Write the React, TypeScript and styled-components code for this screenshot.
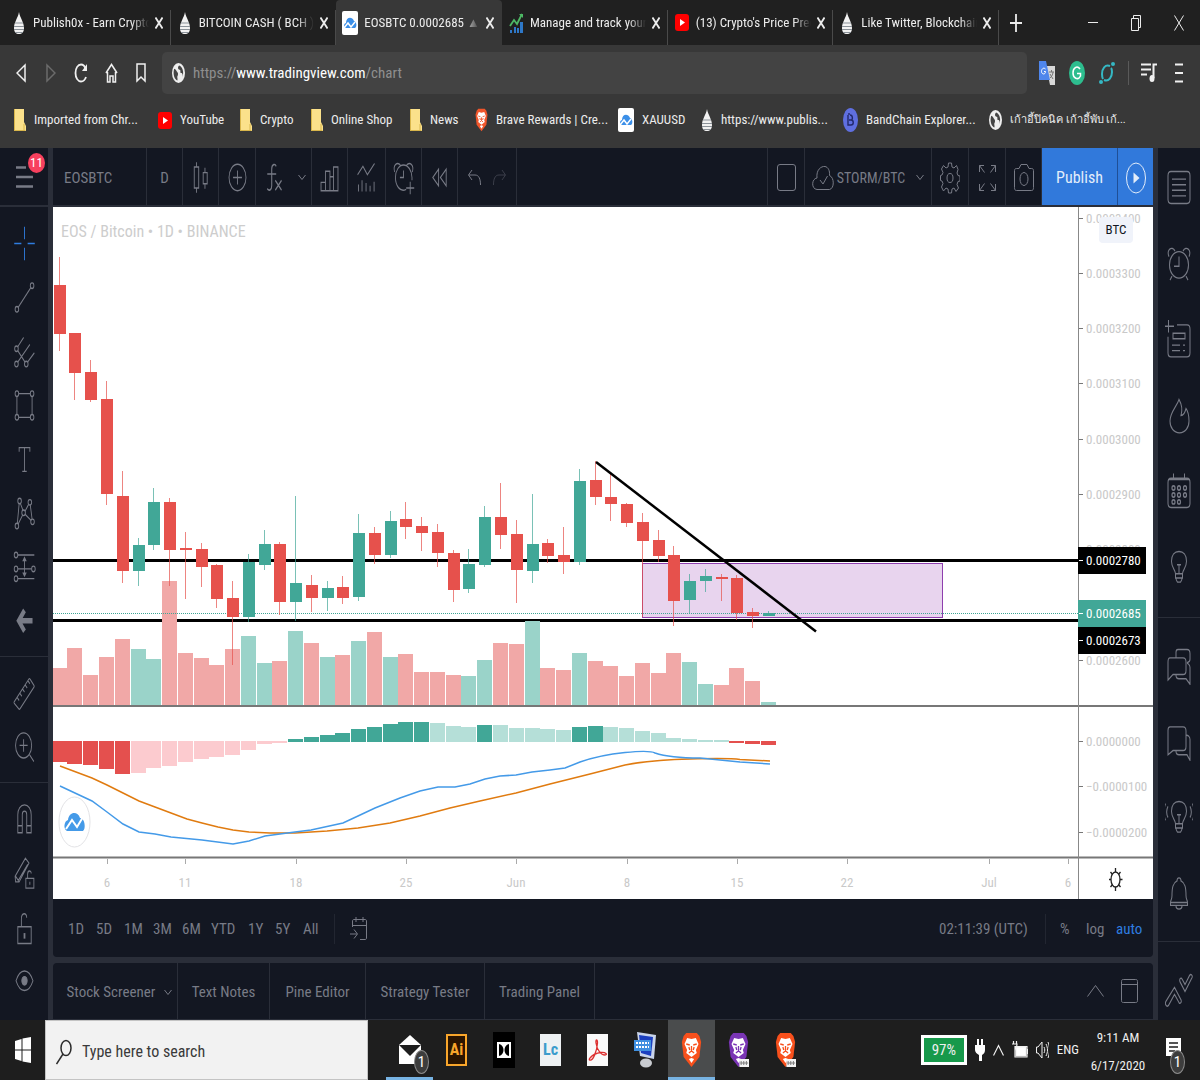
import React, { useState } from 'react';
import styled, { createGlobalStyle, css } from 'styled-components';

const GlobalStyle = createGlobalStyle`
  * {
    box-sizing: border-box;
  }
  body {
    margin: 0;
    background: #131722;
    font-family: 'Roboto Condensed', 'Noto Sans', 'Liberation Sans', sans-serif;
    font-size: 15px;
    line-height: 20px;
  }
  button, input {
    font: inherit;
    color: inherit;
    background: none;
    border: 0;
    padding: 0;
    margin: 0;
  }
  button {
    cursor: pointer;
  }
  svg {
    display: block;
    flex: none;
  }
`

const Page = styled.div`
  display: flex;
  flex-direction: column;
  min-height: 100vh;
`

/* ---------- icons ---------- */

interface IconProps {
  w?: number
  h?: number
  box?: string
  children: React.ReactNode
}

const Icon: React.FC<IconProps> = ({ w = 25, h = 39, box = '0 0 28 28', children }) => (
  <svg width={w} height={h} viewBox={box} preserveAspectRatio="none" fill="none" stroke="currentColor" strokeWidth={1} aria-hidden="true">
    {children}
  </svg>
)

const Drop = () => (
  <Icon w={12} h={24} box="0 0 12 24">
    <path d="M6 1C7 7 11 11 11 17c0 4-2 6-5 6s-5-2-5-6C1 11 5 7 6 1z" fill="#f2f2f2" stroke="none" />
    <path d="M2 12h8M1 15.500h10M1 18.500h10M2 21.500h8" stroke="#8b9299" />
  </Icon>
)

const TradingCloud = () => (
  <Icon w={16} h={24} box="0 0 16 24">
    <rect width="16" height="24" rx="2" fill="#fff" stroke="none" />
    <path d="M4 17c-3-1-2-5 0-5 0-6 6-7 8-2 3 1 3 6 1 7z" fill="#3b8fe8" stroke="none" />
    <path d="M2 17l4-5 3 4 4-5" stroke="#fff" strokeWidth="1.500" />
  </Icon>
)

const ChartLogo = () => (
  <Icon w={14} h={20} box="0 0 14 20">
    <path d="M1 17v3h2v-3zM5 14v6h2v-6zM8 15v5h2v-5zM11 9v11h3V9z" fill="#2e78c8" stroke="none" />
    <path d="M1 13l4-6 3 4 5-10" stroke="#4db864" strokeWidth="1.800" />
    <path d="M10 1h4v4z" fill="#4db864" stroke="none" />
  </Icon>
)

const Tube = () => (
  <Icon w={14} h={17} box="0 0 14 17">
    <rect width="14" height="17" rx="3" fill="#f00" stroke="none" />
    <path d="M5 5l5 3.500-5 3.500z" fill="#fff" stroke="none" />
  </Icon>
)

const Folder = () => (
  <Icon w={12} h={22} box="0 0 12 22">
    <path d="M0 0h10v13l2 4v5H0z" fill="#fbe18b" stroke="none" />
    <path d="M.5 21.500h11M.5 0v22M10 15v6" stroke="#d9b64b" />
  </Icon>
)

const Globe = () => (
  <Icon w={13} h={20} box="0 0 24 24">
    <circle cx="12" cy="12" r="12" fill="#eee" stroke="none" />
    <path d="M4 7c3 0 4 3 6 4s1 4 0 5 1 3 0 5C5 20 1 14 4 7zM13 3c-3 2-2 5 1 5s0 4 3 4 3 3 2 5c4-6 0-13-6-14z" fill="#444" stroke="none" />
  </Icon>
)

const Lion: React.FC<{ fill: string; w?: number; h?: number; tag?: boolean }> = ({ fill, w = 13, h = 24, tag }) => (
  <Icon w={w} h={h} box="0 0 24 36">
    <path d="M6 1h12l3 3 2 6-2 15-9 10-9-10L1 10l2-6z" fill={fill} stroke="none" />
    <path d="M7 6l5 1 5-1 3 6-3 6 1 3-6 4-6-4 1-3-3-6zM12 26l3 1-3 4-3-4z" fill="#fff" stroke="none" />
    <path d="M6 12l4 1M18 12l-4 1M12 14v5M9 21l3-2 3 2M9 15l1 3M15 15l-1 3" stroke={fill} strokeWidth="1.500" />
    {tag && <path d="M13 27h11v8H13z" fill="#f4f4f4" stroke="none" />}
    {tag && <path d="M14 31h9M15 29v4M18 29v4M21 29v4" stroke="#777" />}
  </Icon>
)

const BandLogo = () => (
  <Icon w={15} h={24} box="0 0 15 24">
    <ellipse cx="7.500" cy="12" rx="7.500" ry="12" fill="#5f6fe0" stroke="none" />
    <path d="M5 7v10h3c3 0 3-5 0-5H6M6 12h2c2 0 2-5-1-5M6 5v2" stroke="#22296b" strokeWidth="1.400" />
  </Icon>
)

const Chevron = () => (
  <Icon w={8} h={7} box="0 0 8 7"><path d="M.5 1l3.500 4.500L7.500 1" /></Icon>
)

const Badge = styled.span<{ $tone?: 'pink' }>`
  position: absolute;
  display: grid;
  place-items: center;
  border-radius: 50%;
  color: #fff;
  ${p => p.$tone === 'pink' ? css`
    top: 5px;
    right: 3px;
    width: 17px;
    height: 20px;
    background: #f7405e;
    font-size: 13px;
  ` : css`
    right: 4px;
    bottom: 6px;
    width: 15px;
    height: 24px;
    background: #3d3d3d;
    border: 1px solid #8a8a8a;
    font-size: 15px;
  `}
`

/* ---------- browser ---------- */

const TabBar = styled.header`
  display: flex;
  height: 45px;
  padding-left: 5px;
  background: #202020;
  color: #ececec;
`

const Tabs = styled.div`
  display: flex;
  flex: 0 1 994px;
  min-width: 0;
`

const Tab = styled.div<{ $active?: boolean }>`
  flex: 1 1 0;
  min-width: 0;
  display: flex;
  align-items: center;
  gap: 6px;
  padding: 0 8px 0 6px;
  font-size: 13px;
  background: ${p => p.$active ? '#383838' : 'transparent'};
  border-radius: 4px 4px 0 0;
  position: relative;
  &::after {
    content: '';
    position: absolute;
    right: 0;
    top: 10px;
    bottom: 0;
    width: 1px;
    background: ${p => p.$active ? 'transparent' : '#4a4a4a'};
  }
`

const Favicon = styled.span`
  flex: 0 0 16px;
  display: grid;
  place-items: center;
`

const TabTitle = styled.button`
  flex: 1;
  min-width: 0;
  overflow: hidden;
  white-space: nowrap;
  text-align: left;
  mask-image: linear-gradient(90deg, #000 85%, transparent);
`

const PlainButton = styled.button`
  flex: none;
  display: grid;
  place-items: center;
`

const NewTab = styled(PlainButton)`
  width: 33px;
`

const WindowButtons = styled.div`
  display: flex;
  margin-left: auto;
  button {
    width: 43px;
  }
`

const NavBar = styled.nav`
  display: flex;
  align-items: center;
  height: 55px;
  padding: 0 6px;
  background: #383838;
  color: #f0f0f0;
`

const NavButton = styled(PlainButton)<{ $dim?: boolean }>`
  width: 30px;
  height: 40px;
  color: ${p => p.$dim ? '#6b6b6b' : 'inherit'};
`

const UrlBar = styled.label`
  flex: 1;
  display: flex;
  align-items: center;
  height: 42px;
  margin: 0 5px 0 6px;
  padding-left: 10px;
  border-radius: 5px;
  background: #434343;
  color: #8f8f8f;
  font-size: 15px;
  svg {
    margin-right: 8px;
  }
  input {
    field-sizing: content;
    color: #fff;
    outline: 0;
  }
`

const Bookmarks = styled.nav`
  display: flex;
  align-items: center;
  height: 48px;
  padding: 0 14px 8px;
  background: #383838;
  color: #ececec;
  font-size: 13px;
`

const Bookmark = styled.a<{ $w: number; $small?: boolean }>`
  flex: 0 1 ${p => p.$w}px;
  display: flex;
  align-items: center;
  gap: 8px;
  font-size: ${p => p.$small ? 11 : 13}px;
  color: inherit;
  text-decoration: none;
  white-space: nowrap;
`

const tabs = [
  { title: 'Publish0x - Earn Crypto', icon: <Drop /> },
  { title: 'BITCOIN CASH ( BCH ) ', icon: <Drop /> },
  { title: 'EOSBTC 0.0002685 ▲ +', icon: <TradingCloud /> },
  { title: 'Manage and track your', icon: <ChartLogo /> },
  { title: "(13) Crypto's Price Predi", icon: <Tube /> },
  { title: 'Like Twitter, Blockchain', icon: <Drop /> },
]

const bookmarks = [
  { title: 'Imported from Chr...', icon: <Folder />, w: 144 },
  { title: 'YouTube', icon: <Tube />, w: 82 },
  { title: 'Crypto', icon: <Folder />, w: 71 },
  { title: 'Online Shop', icon: <Folder />, w: 99 },
  { title: 'News', icon: <Folder />, w: 65 },
  { title: 'Brave Rewards | Cre...', icon: <Lion fill="#f1562b" />, w: 143 },
  { title: 'XAUUSD', icon: <TradingCloud />, w: 83 },
  { title: 'https://www.publis...', icon: <Drop />, w: 142 },
  { title: 'BandChain Explorer...', icon: <BandLogo />, w: 146 },
  { title: 'เก้าอี้ปิคนิค เก้าอี้พับ เก้...', icon: <Globe />, w: 150, small: true },
]

const CloseIcon = () => (
  <Icon w={8} h={12} box="0 0 8 12"><path d="M.5 .5l7 11M7.500 .5l-7 11" strokeWidth="1.800" /></Icon>
)

const Browser: React.FC = () => {
  const [url, setUrl] = useState<string>('www.tradingview.com')
  return (
    <>
      <TabBar>
        <Tabs>
          {tabs.map((tab, i) => (
            <Tab key={tab.title} $active={i === 2}>
              <Favicon>{tab.icon}</Favicon>
              <TabTitle>{tab.title}</TabTitle>
              <PlainButton aria-label="Close tab"><CloseIcon /></PlainButton>
            </Tab>
          ))}
        </Tabs>
        <NewTab aria-label="New tab">
          <Icon w={12} h={18} box="0 0 12 18"><path d="M6 0v18M0 9h12" strokeWidth="1.800" /></Icon>
        </NewTab>
        <WindowButtons>
          <PlainButton aria-label="Minimize"><Icon w={10} h={16} box="0 0 10 16"><path d="M0 7.500h10" /></Icon></PlainButton>
          <PlainButton aria-label="Restore"><Icon w={10} h={16} box="0 0 10 16"><path d="M.5 3.500h7v12h-7zM2.500 3V.500h7v12H8" /></Icon></PlainButton>
          <PlainButton aria-label="Close"><Icon w={10} h={16} box="0 0 10 16"><path d="M.5 .5l9 15M9.500 .5l-9 15" /></Icon></PlainButton>
        </WindowButtons>
      </TabBar>
      <NavBar>
        <NavButton aria-label="Back"><Icon w={10} h={20} box="0 0 10 20"><path d="M9 2v16L1 10z" strokeWidth="1.500" /></Icon></NavButton>
        <NavButton aria-label="Forward" $dim><Icon w={10} h={20} box="0 0 10 20"><path d="M1 2v16l8-8z" strokeWidth="1.500" /></Icon></NavButton>
        <NavButton aria-label="Reload">
          <Icon w={14} h={20} box="0 0 14 20">
            <path d="M12 14c-1 3-3 4.500-5 4.500C4 18.500 1.500 15 1.500 10S4 1.500 7 1.500c2 0 3.500 1 4.500 4" strokeWidth="1.800" />
            <path d="M13 1v7H8z" fill="currentColor" stroke="none" />
          </Icon>
        </NavButton>
        <NavButton aria-label="Home">
          <Icon w={13} h={20} box="0 0 13 20"><path d="M1 10l5.500-8.500L12 10M2.500 9v10H5v-6h3v6h2.500V9" strokeWidth="1.500" /></Icon>
        </NavButton>
        <NavButton aria-label="Bookmark this page">
          <Icon w={10} h={20} box="0 0 10 20"><path d="M1 1h8v17l-4-4-4 4z" strokeWidth="1.500" /></Icon>
        </NavButton>
        <UrlBar>
          <Globe />
          <span>https://</span>
          <input aria-label="Address" value={url} onChange={(e) => setUrl(e.target.value)} />
          <span>/chart</span>
        </UrlBar>
        <NavButton aria-label="Translate">
          <Icon w={16} h={24} box="0 0 16 24">
            <path d="M7 5h9v19h-5z" fill="#d8d8d8" stroke="none" />
            <path d="M0 0h7l4 19H0z" fill="#4f86ec" stroke="none" />
            <path d="M6.500 8c-2-2-4 0-4 2.500 0 3 4 3.500 4 0H5" stroke="#fff" />
            <path d="M10 11h5M12.500 9v2M14 11c0 3-2 5-3 6M11 13l3 5" stroke="#777" />
          </Icon>
        </NavButton>
        <NavButton aria-label="Grammar">
          <Icon w={16} h={24} box="0 0 16 24">
            <ellipse cx="8" cy="12" rx="8" ry="12" fill="#2dbd8e" stroke="none" />
            <path d="M11 8C8 4 4 7 4 12s5 8 7.500 3v-2.500H8" stroke="#fff" strokeWidth="1.500" />
          </Icon>
        </NavButton>
        <NavButton aria-label="Wallet">
          <Icon w={16} h={24} box="0 0 16 24">
            <g stroke="#35b8c4" strokeWidth="2">
              <path d="M11 5C6 3 3 8 3 13c0 2 0 3 1 5M5 19c5 2 8-3 8-8 0-2 0-3-1-4" />
              <circle cx="14" cy="3" r="1" /><circle cx="2" cy="21" r="1" />
            </g>
          </Icon>
        </NavButton>
        <Icon w={12} h={24} box="0 0 12 24"><path d="M6.500 0v24" stroke="#5a5a5a" /></Icon>
        <NavButton aria-label="Media">
          <Icon w={16} h={19} box="0 0 16 19">
            <path d="M0 1.500h10M0 6.500h10M0 11.500h6M12.500 15V1.500H16" strokeWidth="2" />
            <ellipse cx="11" cy="15.500" rx="2.500" ry="3.500" fill="currentColor" stroke="none" />
          </Icon>
        </NavButton>
        <NavButton aria-label="Menu">
          <Icon w={8} h={20} box="0 0 8 20"><path d="M0 1.500h8M0 10h8M0 18.500h8" strokeWidth="2.200" /></Icon>
        </NavButton>
      </NavBar>
      <Bookmarks>
        {bookmarks.map(mark => (
          <Bookmark key={mark.title} href="#" $w={mark.w} $small={mark.small}>{mark.icon}{mark.title}</Bookmark>
        ))}
      </Bookmarks>
    </>
  )
}

/* ---------- trading view ---------- */

const Workspace = styled.main`
  flex: 1;
  display: grid;
  grid-template-columns: 48px minmax(0, 1fr) 42px;
  column-gap: 5px;
  background: #2a2e39;
  color: #787b86;
`

const SideBar = styled.aside`
  display: flex;
  flex-direction: column;
  background: #131722;
`

const SideGroup = styled.div<{ $top: number; $bottom: number }>`
  display: flex;
  flex-direction: column;
  padding: ${p => p.$top}px 0 ${p => p.$bottom}px;
  border-top: 1px solid #2a2e39;
  &:first-child {
    border-top: 0;
  }
`

const SideButton = styled(PlainButton)<{ $h: number; $active?: boolean }>`
  height: ${p => p.$h}px;
  color: ${p => p.$active ? '#2f7de0' : 'inherit'};
`

const MenuButton = styled(PlainButton)`
  position: relative;
  height: 58px;
  border-bottom: 1px solid #2a2e39;
`

const Center = styled.div`
  display: flex;
  flex-direction: column;
  min-width: 0;
`

const TopBar = styled.div`
  display: flex;
  height: 57px;
  margin-bottom: 2px;
  background: #131722;
`

const ToolCell = styled.button<{ $w: number }>`
  flex: 0 0 ${p => p.$w}px;
  display: flex;
  align-items: center;
  justify-content: center;
  gap: 12px;
  padding-top: 2px;
  font-size: 15px;
  border-right: 1px solid #2a2e39;
`

const SymbolCell = styled(ToolCell)`
  justify-content: flex-start;
  padding-left: 11px;
`

const ToolSpace = styled.div`
  flex: 1;
  border-right: 1px solid #2a2e39;
`

const LayoutCell = styled(ToolCell)`
  gap: 3px;
  font-size: 14px;
  svg:last-child {
    margin-left: 8px;
  }
`

const Publish = styled(ToolCell)`
  background: #3179db;
  color: #e3edfa;
  font-size: 16px;
  border-color: #1f4f96;
  &:last-child {
    border: 0;
  }
`

const ChartArea = styled.section`
  position: relative;
  background: #fff;
  svg {
    width: 100%;
    height: auto;
  }
  text {
    font-size: 13px;
    fill: #c9c9c9;
    dominant-baseline: central;
  }
`

const Legend = styled.h1`
  position: absolute;
  top: 15px;
  left: 8px;
  margin: 0;
  font-size: 16px;
  font-weight: 400;
  color: #cdcdcd;
`

const Currency = styled.button`
  position: absolute;
  top: 10px;
  right: 20px;
  width: 34px;
  height: 26px;
  border-radius: 4px;
  background: #f0f3fa;
  color: #131722;
  font-size: 13px;
`

const RangeBar = styled.div`
  display: flex;
  align-items: center;
  height: 58px;
  margin-bottom: 6px;
  padding: 2px 10px 0 15px;
  border-radius: 0 0 4px 4px;
  background: #131722;
  font-size: 15px;
`

const RangeButton = styled.button<{ $w: number; $on?: boolean }>`
  flex: 0 0 ${p => p.$w}px;
  text-align: left;
  white-space: nowrap;
  color: ${p => p.$on ? '#2f7de0' : 'inherit'};
`

const Rule = styled.span<{ $gap: number }>`
  width: 1px;
  height: 30px;
  margin-right: ${p => p.$gap}px;
  background: #222631;
`

const Spacer = styled.span`
  flex: 1;
`

const PanelTabs = styled.div`
  flex: 1;
  display: flex;
  min-height: 56px;
  margin-bottom: 1px;
  padding-right: 7px;
  border-radius: 4px 4px 0 0;
  background: #131722;
  align-items: stretch;
`

const PanelTab = styled.button<{ $w: number }>`
  flex: 0 0 ${p => p.$w}px;
  display: flex;
  align-items: center;
  justify-content: center;
  gap: 9px;
  padding-top: 2px;
  font-size: 15px;
  white-space: nowrap;
  border-right: 1px solid #2a2e39;
  svg {
    margin-right: -9px;
  }
`

const PanelButton = styled(PlainButton)`
  width: 34px;
`

const bulb = (
  <>
    <path d="M10.500 18.500c0-3-4-4-4-9C6.500 5 9.500 2.500 14 2.500S21.500 5 21.500 9.500c0 5-4 6-4 9z" />
    <path d="M10.500 18.500v3h7v-3M11 21.500c0 2 1 2.500 1.500 3h3c.5-.5 1.500-1 1.500-3M14 18v-6M12 12h4" />
  </>
)

const alarm = (
  <>
    <ellipse cx="14" cy="15" rx="9.500" ry="9.500" />
    <path d="M14 9v7h-5M4 9C1 4 7 1 10 5M24 9c3-5-3-8-6-4M7 23l-2 3M21 23l2 3" />
  </>
)

const drawTools: React.ReactNode[][] = [
  [
    <path d="M14 2v9M14 17v9M2.500 14h8M17.500 14h8" stroke="#2f7de0" />,
    <><circle cx="5.500" cy="22.500" r="2" /><circle cx="22.500" cy="5.500" r="2" /><path d="M7 21L21 7" /></>,
    <><circle cx="5" cy="12" r="2" /><circle cx="5" cy="23" r="2" /><circle cx="16" cy="23" r="2" /><path d="M6.500 10.500L13 4M6.500 13.500l8 8M6.500 21.500L20 9M17.500 21.500L25 15" /></>,
    <><circle cx="5.500" cy="5.500" r="2" /><circle cx="22.500" cy="5.500" r="2" /><circle cx="5.500" cy="22.500" r="2" /><circle cx="22.500" cy="22.500" r="2" /><path d="M7.500 5.500h13M7.500 22.500h13M5.500 7.500v13M22.500 7.500v13" /></>,
    <path d="M8 8.500V5.500h12v3M14 5.500v17M11.500 22.500h5" />,
    <><circle cx="8.500" cy="5" r="2" /><circle cx="20" cy="6" r="2" /><circle cx="13" cy="13.500" r="2" /><circle cx="5.500" cy="23" r="2" /><circle cx="23" cy="20" r="2" /><path d="M8 7L6 21M9.500 7l3 5M14.500 12.500l4-5M7 21.500l5-6.500M14.500 14.500l7 4.500M20.500 8l2 10" /></>,
    <><circle cx="4.500" cy="5" r="2" /><circle cx="4.500" cy="15" r="2" /><circle cx="24" cy="15" r="2" /><circle cx="4.500" cy="22" r="2" /><path d="M6.500 5H25M6.500 15H22M6.500 22H25M14 9v10" /><path d="M14 6l2.500 3.500h-5zM14 21l2.500-3.500h-5z" fill="currentColor" stroke="none" /></>,
    <path d="M23 13.500H8M14 6L7.500 13.500 14 21" strokeWidth="4" />,
  ],
  [
    <path d="M2.500 20L19 3.500c.5-.5 1 0 1.500.5l4 4c.5.500.5 1 0 1.500L9 25c-.5.500-1 .5-1.500 0l-5-4c-.5-.5-.5-.5 0-1zM6 17l2 2M9 14l2 2M12 11l2 2M15 8l2 2M18 5l2 2" />,
    <><circle cx="13" cy="12.500" r="9" /><path d="M19.500 19l5 5M13 8v9M8.500 12.500h9" /></>,
  ],
  [
    <path d="M6.500 23.500v-13c0-4 3-7 7.500-7s7.500 3 7.500 7v13h-5v-13c0-1.500-1-2.500-2.500-2.500s-2.500 1-2.500 2.500v13zM6.500 18.500h5M16.500 18.500h5" />,
    <path d="M3.500 16L15 3l4 3.500L8 20H4zM7 19L17.500 7.500M4 16l4 4M15.500 17.500h9v7h-9zM17.500 17.500v-3c0-3 4-3 4-.5M20 20v2" />,
    <><path d="M6.500 13.500h15v12h-15zM10.500 13.500V8c0-5 6-5 6-1" /><path d="M14 18v4" strokeWidth="2" /></>,
    <><path d="M4.500 13.500c2-4 5-7 9.500-7s7.500 3 9.500 7c-2 4-5 7-9.500 7s-7.500-3-9.500-7z" /><circle cx="14" cy="13.500" r="3" fill="currentColor" /></>,
  ],
]

const widgets: React.ReactNode[][] = [
  [
    <path d="M6 2.500h16c2 0 3 1 3 3v17c0 2-1 3-3 3H6c-2 0-3-1-3-3v-17c0-2 1-3 3-3zM7 8h14M7 12h14M7 16h14M7 20h14" />,
    alarm,
    <path d="M12 3.500h10c2 0 3 1 3 3v17c0 2-1 3-3 3H6c-2 0-3-1-3-3V12M3.500 0v9M-1 4.500h10M8 9.500h12v4H8zM7 18h8M18 18h2M7 22h8M18 22h2" />,
    <path d="M14 2.500c-2 5-9 9-9 15.500 0 5 4 8.500 9.500 8.500S24 23 24 18c0-4-1-7-3-9-1 3-3 5-5 5 2-5 0-9-2-11.500z" />,
    <><path d="M6 4.500h16c2 0 3 1 3 3v15c0 2-1 3-3 3H6c-2 0-3-1-3-3v-15c0-2 1-3 3-3zM3 5.500h22M8.500 1v5M19.500 1v5" /><g strokeWidth="1.200"><circle cx="8.500" cy="11.500" r="1.500" /><circle cx="14" cy="11.500" r="1.500" /><circle cx="20" cy="11.500" r="1.500" /><circle cx="8.500" cy="16.500" r="1.500" /><circle cx="14" cy="16.500" r="1.500" /><circle cx="20" cy="16.500" r="1.500" /><circle cx="8.500" cy="21.500" r="1.500" /><circle cx="14" cy="21.500" r="1.500" /></g></>,
    bulb,
  ],
  [
    <path d="M11 8V4.500c0-1.500 1-2 2-2h9c2 0 3 1 3 3v4c0 2-1 2-3 2.500M5 8.500h13c2 0 3 1 3 3v6c0 2-1 3-3 3H8l-5 4v-13c0-2 1-3 2-3zM11 21c0 2 2 2.500 3 2.500h7l4 4v-12c0-2-2-3-3-3" />,
    <path d="M5 3.500h13c2 0 3 1 3 3v11c0 2-1 3-3 3H8l-5 3V6c0-2 1-2.500 2-2.500zM11 21c0 2 2 2.500 3 2.500h8l3 4v-15c0-2-2-3-3.500-3" />,
    <>{bulb}<path d="M3 6c-2 3-2 5 0 8M.5 4c-2 4-2 8 0 12M25 6c2 3 2 5 0 8M27.500 4c2 4 2 8 0 12" /></>,
    <path d="M5.500 20.500c0-2 1.500-2 1.500-5 0-6 1-9 5-10.500 0-3 4-3 4 0 4 1.500 5 4.500 5 10.500 0 3 1.500 3 1.500 5v2h-17zM11 23c0 3 6 3 6 0M5.500 20.500h17" />,
  ],
  [
    <path d="M1 21L9.500 11l6.500 9c1 2-1 3-2 2l-4.500-6L3.500 24c-2 1.500-4-1-2.500-3zM15 7l5 7 7-10c1-1.500-1-3-2.500-1.500L20 9l-3-4c-1-1.500-3 0-2 2z" />,
  ],
]

const N = 15.76
const center = (i: number) => Math.round(59.7 + i * N)

const bars = [
  // direction, high, body top, body bottom, low, volume top, macd
  [0, 257, 285, 334, 351, 668, 762], [0, 333, 333, 373, 400, 648, 764], [0, 360, 372, 400, 402, 675, 765],
  [0, 381, 399, 494, 505, 657, 769], [0, 471, 496, 571, 583, 639, 774], [1, 538, 545, 571, 586, 649, 773],
  [1, 488, 502, 545, 550, 659, 768], [0, 498, 502, 550, 586, 581, 766], [0, 532, 548, 550, 599, 653, 762],
  [0, 543, 549, 567, 587, 658, 759], [0, 564, 565, 599, 608, 665, 757], [0, 581, 598, 617, 665, 649, 755],
  [1, 554, 562, 617, 622, 636, 750], [1, 530, 544, 565, 570, 663, 744], [0, 542, 544, 602, 615, 661, 743],
  [1, 496, 583, 602, 621, 631, 739], [0, 575, 585, 598, 612, 643, 737], [1, 581, 588, 598, 611, 657, 735],
  [0, 576, 587, 598, 604, 655, 733], [1, 514, 533, 597, 601, 641, 729], [0, 527, 533, 555, 564, 632, 727],
  [1, 511, 521, 555, 558, 657, 724], [0, 502, 519, 527, 539, 654, 722], [0, 517, 526, 533, 551, 672, 722],
  [0, 524, 532, 553, 567, 672, 723], [0, 550, 553, 590, 602, 675, 726], [1, 549, 564, 589, 593, 676, 727],
  [1, 506, 517, 565, 567, 660, 725], [0, 483, 517, 535, 549, 643, 725], [0, 520, 534, 570, 603, 644, 728],
  [1, 494, 544, 571, 583, 621, 728], [0, 539, 543, 556, 563, 668, 729], [0, 527, 555, 562, 574, 670, 730],
  [1, 469, 481, 562, 565, 653, 727], [0, 461, 480, 497, 505, 661, 726], [0, 473, 497, 504, 521, 666, 727],
  [0, 503, 504, 523, 527, 676, 728], [0, 513, 522, 541, 617, 663, 731], [0, 530, 540, 556, 562, 673, 733],
  [0, 546, 555, 601, 626, 653, 738], [1, 574, 581, 600, 613, 662, 739], [1, 569, 576, 581, 592, 684, 740],
  [0, 574, 577, 579, 601, 685, 740], [0, 575, 578, 613, 620, 668, 743], [0, 608, 612, 616, 628, 681, 744],
  [1, 611, 613, 616, 616, 702, 745],
]

const macdColor = (i: number) => {
  if (i < 5 || i > 42) return '#e4504e'
  if (i < 15) return '#fccbcf'
  if (i < 24 || i === 27 || i === 33 || i === 34) return '#41a797'
  return '#b5dfd8'
}

const signal = 'M60 766L92 778 107 785 123 793 139 801 155 807 171 813 187 819 202 823 218 827 233 830 249 832 270 833 295 833 327 831 358 828 390 823 420 816 450 808 480 801 516 793 550 784 590 774 625 765Q650 760 690 759T740 759.500L770 761'
const macd = 'M60 786L92 801 107 812 123 824 139 832 155 834 171 837 202 840 233 844 249 841 265 836 295 832 311 830 343 823 358 816 375 808 400 798 420 791 438 787 455 787 470 784 485 779 500 776 516 775 532 772 550 770 565 768 580 762Q600 755 625 752.500T655 753Q670 758 700 758L740 762 770 764'

const prices: [number, string][] = [
  [218, '0.0003400'], [273, '0.0003300'], [328, '0.0003200'], [383, '0.0003100'], [439, '0.0003000'],
  [494, '0.0002900'], [549, '0.0002800'], [605, '0.0002700'], [660, '0.0002600'],
  [741, '0.0000000'], [786, '−0.0000100'], [832, '−0.0000200'],
]

const dates: [number, string][] = [
  [107, '6'], [185, '11'], [296, '18'], [406, '25'], [516, 'Jun'],
  [627, '8'], [737, '15'], [847, '22'], [989, 'Jul'], [1068, '6'],
]

const tags: [number, string, string][] = [
  [560, '0.0002780', '#000'], [613, '0.0002685', '#41a797'], [640, '0.0002673', '#000'],
]

const Chart: React.FC = () => (
  <ChartArea>
    <svg viewBox="53 207 1100 692" role="img" aria-label="EOS / Bitcoin daily chart">
      <path d="M53 560.500h1026M53 620.500h1026" stroke="#000" strokeWidth="3" />
      <rect x="642.500" y="563.500" width="300" height="54" fill="#e8d4ee" stroke="#8e3fae" />
      {bars.map((b, i) => (
        <rect key={i} x={center(i) - 8} y={b[5]} width="15" height={706 - b[5]} fill={b[0] ? '#9ad3c9' : '#f1a8a7'} />
      ))}
      <path d="M53 613.500h1026" stroke="#41a797" strokeDasharray="1 1" />
      {bars.map((b, i) => {
        const x = center(i)
        const color = b[0] ? '#41a797' : '#e6514c'
        return (
          <g key={i} fill={color}>
            <rect x={x - 1} y={b[1]} width="1" height={b[4] - b[1]} opacity="0.7" />
            <rect x={x - 6} y={b[2]} width="12" height={b[3] - b[2]} />
          </g>
        )
      })}
      {bars.map((b, i) => {
        const zero = i > 14 && i < 43 ? 742 : 741
        return <rect key={i} x={center(i) - 8} y={Math.min(b[6], zero)} width="15" height={Math.abs(b[6] - zero)} fill={macdColor(i)} />
      })}
      <path d={signal} fill="none" stroke="#e07b10" strokeWidth="1.500" />
      <path d={macd} fill="none" stroke="#449ae8" strokeWidth="1.500" />
      <path d="M596 462l220 169.500" stroke="#000" strokeWidth="2.500" />
      <ellipse cx="74.500" cy="822" rx="15.500" ry="25" fill="#fff" stroke="#e3e3e6" />
      <path d="M67 831c-4-2-3-10 1-11 1-9 10-9 12-2 5 0 6 11 3 13z" fill="#449ae8" />
      <path d="M66 829l6-9 5 7 6-10" fill="none" stroke="#fff" strokeWidth="2" />
      <path d="M53 706h1100M53 857.500h1100" stroke="#777" strokeWidth="2" />
      <path d="M1078.500 207v692" stroke="#888" />
      {prices.map(([y, label]) => (
        <g key={label}>
          <path d={`M1079 ${y + 0.5}h4`} stroke="#777" />
          <text x="1086" y={y}>{label}</text>
        </g>
      ))}
      {dates.map(([x, label]) => (
        <g key={x}>
          <path d={`M${x + 0.5} 859v5`} stroke="#aaa" />
          <text x={x} y="882" textAnchor="middle">{label}</text>
        </g>
      ))}
      {tags.map(([y, label, color]) => (
        <g key={label}>
          <rect x="1078" y={y - 13} width="68" height="27" fill={color} />
          <path d={`M1079 ${y + 0.5}h4`} stroke="#fff" />
          <text x="1086" y={y} style={{ fill: '#fff' }}>{label}</text>
        </g>
      ))}
      <g stroke="#222" fill="none">
        <ellipse cx="1115.500" cy="879.500" rx="4.500" ry="7.500" strokeWidth="1.300" />
        <path d="M1115.500 868v4M1115.500 887v4M1109 879.500h2M1120 879.500h2.500M1110.500 872l2 2.500M1120.500 872l-2 2.500M1110.500 887l2-2.500M1120.500 887l-2-2.500" strokeWidth="1.300" />
      </g>
    </svg>
    <Legend>EOS / Bitcoin • 1D • BINANCE</Legend>
    <Currency>BTC</Currency>
  </ChartArea>
)

const ranges: [string, number][] = [
  ['1D', 28], ['5D', 28], ['1M', 29], ['3M', 29], ['6M', 29], ['YTD', 37], ['1Y', 27], ['5Y', 28], ['All', 31],
]

const panels: [string, number][] = [
  ['Stock Screener', 125], ['Text Notes', 92], ['Pine Editor', 96], ['Strategy Tester', 119], ['Trading Panel', 110],
]

const drawNames = ['Cross', 'Trend line', 'Pitchfork', 'Shapes', 'Text', 'Patterns', 'Prediction', 'Hide toolbar', 'Measure', 'Zoom in', 'Magnet', 'Stay in drawing mode', 'Lock drawings', 'Hide drawings']
const widgetNames = ['Watchlist', 'Alerts', 'Data window', 'Hotlists', 'Calendar', 'My ideas', 'Public chats', 'Private chats', 'Ideas stream', 'Notifications', 'Order panel']

// top padding, bottom padding, button height
const widgetSizes = [[1, 12, 76], [9, 10, 76], [20, 0, 58]]

const TradingView: React.FC = () => {
  let drawIndex = 0
  let widgetIndex = 0
  return (
    <Workspace>
      <SideBar>
        <MenuButton aria-label="Menu">
          <Icon w={17} h={22} box="0 0 17 22"><path d="M0 1.500h10M0 11h17M0 20.500h17" strokeWidth="2.500" /></Icon>
          <Badge $tone="pink">11</Badge>
        </MenuButton>
        {drawTools.map((group, g) => (
          <SideGroup key={g} $top={9} $bottom={8}>
            {group.map((icon, i) => (
              <SideButton key={i} $h={54} $active={g === 0 && i === 0} aria-label={drawNames[drawIndex++]}>
                <Icon>{icon}</Icon>
              </SideButton>
            ))}
          </SideGroup>
        ))}
      </SideBar>
      <Center>
        <TopBar>
          <SymbolCell $w={94}>EOSBTC</SymbolCell>
          <ToolCell $w={36}>D</ToolCell>
          <ToolCell $w={36} aria-label="Candles">
            <Icon><path d="M7 6.500h5v15H7zM9.500 3v3.500M9.500 21.500V25M17 10.500h4.500v8H17zM19 7v3.500M19 18.500V22" /></Icon>
          </ToolCell>
          <ToolCell $w={37} aria-label="Compare">
            <Icon><circle cx="14" cy="14" r="9.500" /><path d="M14 9v10M9 14h10" /></Icon>
          </ToolCell>
          <ToolCell $w={56} aria-label="Indicators">
            <Icon><path d="M17 6c-1-2-5-2-5 2v12c0 3-3 4-5 2M7 11.500h10M16 16l7 7M23 16l-7 7" strokeWidth="1.200" /></Icon>
            <Chevron />
          </ToolCell>
          <ToolCell $w={36} aria-label="Financials">
            <Icon><path d="M4.500 17.500h5v6h-5zM9.500 9.500h5v14h-5zM14.500 13.500h4v10h-4zM18.500 6.500h5v17h-5z" /></Icon>
          </ToolCell>
          <ToolCell $w={38} aria-label="Templates">
            <Icon><path d="M4 12l6-6 5 6 8-8M5 19v5M9 16v8M13.500 18v6M18 20v4M22.500 17v7" /></Icon>
          </ToolCell>
          <ToolCell $w={36} aria-label="Alert">
            <Icon><path d="M17 22.500c-7 2.500-12-3-12-8.500C5 9 9 5 14 5s9.500 4 9.500 9v2M14 9v5h-4M4 10C2 5 7 2 11 5.500M24 10c2-5-3-8-7-4.500M21.500 17v9M17 21.500h9" /></Icon>
          </ToolCell>
          <ToolCell $w={36} aria-label="Replay">
            <Icon><path d="M13 8v12l-6.500-6zM21.500 8v12L15 14z" /></Icon>
          </ToolCell>
          <ToolCell $w={59} aria-label="Undo">
            <Icon w={13} h={17} box="0 0 13 17"><path d="M4 1L.5 6 4 11M1 6h6c4 0 5.500 4 5.500 10" /></Icon>
            <Icon w={13} h={17} box="0 0 13 17"><path d="M9 1l3.500 5L9 11M12 6H6C2 6 .5 10 .5 16" opacity="0.4" /></Icon>
          </ToolCell>
          <ToolSpace />
          <ToolCell $w={37} aria-label="Layout"><Icon w={19} h={27} box="0 0 19 27"><rect x=".5" y=".5" width="18" height="26" rx="2.500" /></Icon></ToolCell>
          <LayoutCell $w={127}>
            <Icon w={22} h={26} box="0 0 22 26"><path d="M5 24.500C-1 24-.5 13.500 5 13 4 5 9 1 13 1.500c3 .5 5 4 4.500 9 5 2 5 13 0 14zM8 15l3 4 4.500-8" /></Icon>
            STORM/BTC
            <Chevron />
          </LayoutCell>
          <ToolCell $w={37} aria-label="Chart settings">
            <Icon w={20} h={32} box="0 0 20 32"><path d="M8.500 1h3l.5 4 2 1 2.500-2.500 1.500 4-1 3.500 1 2.500 2 .5v5l-2 .5-1 3 1.500 3.500L16 29.500 14 26l-2 1-.5 4h-3L8 27l-2-1-2.500 3-2-4 1.500-3.500-1-2.500-1.500-.5v-5L2 13l1-2.500L1.500 7l2-3.500L6 6l2-1z" /><ellipse cx="10" cy="16" rx="3" ry="4.500" /></Icon>
          </ToolCell>
          <ToolCell $w={37} aria-label="Fullscreen">
            <Icon w={17} h={26} box="0 0 17 26"><path d="M.5 7V.500H5M.5 .5l5 7M12 .5h4.500V7M16.500 .5l-5 7M.5 19v6.500H5M.5 25.500l5-7M12 25.500h4.500V19M16.500 25.500l-5-7" /></Icon>
          </ToolCell>
          <ToolCell $w={36} aria-label="Snapshot">
            <Icon w={20} h={27} box="0 0 20 27"><path d="M2.500 4.500H5l2-4h6l2 4h2.500c1.500 0 2 1 2 2v17c0 2-.5 3-2 3h-15c-1.500 0-2-1-2-3v-17c0-1 .5-2 2-2z" /><ellipse cx="10" cy="15" rx="4" ry="6.500" /></Icon>
          </ToolCell>
          <Publish $w={76}>Publish</Publish>
          <Publish $w={35} aria-label="Start stream">
            <Icon w={20} h={32} box="0 0 20 32"><ellipse cx="10" cy="16" rx="9.500" ry="15" /><path d="M7.500 10.500l6 5.500-6 5.500z" fill="currentColor" stroke="none" /></Icon>
          </Publish>
        </TopBar>
        <Chart />
        <RangeBar>
          {ranges.map(([label, w]) => <RangeButton key={label} $w={w}>{label}</RangeButton>)}
          <Rule $gap={15} />
          <PlainButton aria-label="Go to date">
            <Icon w={17} h={24} box="0 0 17 24"><path d="M2.500 10V4c0-1 .5-1.500 1.500-1.500h11c1 0 1.500.5 1.500 1.500v17c0 1-.5 1.500-1.500 1.500h-5M2.500 8.500h14M6 0v5M13 0v5M0 17h7M4 12.500L7.500 17 4 21.500" /></Icon>
          </PlainButton>
          <Spacer />
          <RangeButton $w={106}>02:11:39 (UTC)</RangeButton>
          <Rule $gap={14} />
          <RangeButton $w={26}>%</RangeButton>
          <RangeButton $w={30}>log</RangeButton>
          <RangeButton $w={27} $on>auto</RangeButton>
        </RangeBar>
        <PanelTabs>
          {panels.map(([label, w], i) => (
            <PanelTab key={label} $w={w}>{label}{i === 0 && <Chevron />}</PanelTab>
          ))}
          <Spacer />
          <PanelButton aria-label="Open panel"><Icon w={17} h={12} box="0 0 17 12"><path d="M.5 11.500l8-11 8 11" /></Icon></PanelButton>
          <PanelButton aria-label="Maximize panel"><Icon w={17} h={24} box="0 0 17 24"><path d="M2.500 .5h12c1.500 0 2 .5 2 2v19c0 1.500-.5 2-2 2h-12c-1.500 0-2-.5-2-2v-19c0-1.500.5-2 2-2zM.5 5.500h16" /></Icon></PanelButton>
        </PanelTabs>
      </Center>
      <SideBar>
        {widgets.map((group, g) => (
          <SideGroup key={g} $top={widgetSizes[g][0]} $bottom={widgetSizes[g][1]}>
            {group.map((icon, i) => (
              <SideButton key={i} $h={widgetSizes[g][2]} aria-label={widgetNames[widgetIndex++]}><Icon w={28}>{icon}</Icon></SideButton>
            ))}
          </SideGroup>
        ))}
      </SideBar>
    </Workspace>
  )
}

/* ---------- taskbar ---------- */

const TaskBar = styled.footer`
  display: flex;
  height: 60px;
  background: #1e1e1e;
  color: #f0f0f0;
`

const StartButton = styled(PlainButton)`
  width: 45px;
`

const Search = styled.label`
  flex: 0 1 323px;
  display: flex;
  align-items: center;
  gap: 10px;
  padding: 3px 10px 0;
  background: #f2f2f2;
  border: 1px solid #c4c4c4;
  color: #2b2b2b;
  font-size: 16px;
  input {
    flex: 1;
    min-width: 0;
    outline: 0;
  }
  input::placeholder {
    color: #3a3a3a;
    opacity: 1;
  }
`

const Apps = styled.div`
  display: flex;
  margin-left: 18px;
`

const AppButton = styled(PlainButton)<{ $open?: boolean; $active?: boolean }>`
  position: relative;
  width: 47px;
  background: ${p => p.$active ? '#4a4c4d' : 'none'};
  box-shadow: ${p => p.$open ? 'inset 0 -3px #77b3e3' : 'none'};
`

const AppTile = styled.span<{ $bg: string; $fg: string; $edge?: string }>`
  display: grid;
  place-items: center;
  width: 21px;
  height: 32px;
  background: ${p => p.$bg};
  color: ${p => p.$fg};
  border: 2px solid ${p => p.$edge || p.$bg};
  font-size: 16px;
  font-weight: 700;
`

const Tray = styled.div`
  display: flex;
  align-items: center;
  margin-left: auto;
  padding-right: 11px;
  gap: 8px;
  font-size: 13px;
`

const Battery = styled.span`
  display: grid;
  place-items: center;
  width: 46px;
  height: 30px;
  background: #17994b;
  border: 3px solid #fff;
  font-size: 15px;
`

const Clock = styled.time`
  width: 62px;
  padding-top: 4px;
  text-align: center;
  font-size: 13px;
  line-height: 28px;
`

const Notices = styled(PlainButton)`
  position: relative;
  width: 32px;
  height: 60px;
`

const Desktop: React.FC = () => {
  const [query, setQuery] = useState<string>('')
  return (
    <TaskBar>
      <StartButton aria-label="Start">
        <Icon w={16} h={26} box="0 0 16 26"><path d="M0 4l6.500-2v10.500H0zM7.500 1.500L16 0v12.500H7.500zM0 13.500h6.500V24L0 22zM7.500 13.500H16V26l-8.500-1.500z" fill="#fff" stroke="none" /></Icon>
      </StartButton>
      <Search>
        <Icon w={16} h={26} box="0 0 16 26"><ellipse cx="10" cy="9" rx="5" ry="7.500" strokeWidth="1.500" /><path d="M7 15L.5 25" strokeWidth="1.500" /></Icon>
        <input aria-label="Search" placeholder="Type here to search" value={query} onChange={(e) => setQuery(e.target.value)} />
      </Search>
      <Apps>
        <AppButton aria-label="Mail" $open>
          <Icon w={24} h={32} box="0 0 24 32">
            <path d="M1 11L12 1l11 10v19H1z" fill="#fff" stroke="none" /><path d="M1 11h22L12 22z" fill="#1e1e1e" stroke="none" />
          </Icon>
          <Badge>1</Badge>
        </AppButton>
        <AppButton><AppTile $bg="#2b1500" $fg="#f9a62b" $edge="#f9a62b">Ai</AppTile></AppButton>
        <AppButton aria-label="Dolby">
          <Icon w={22} h={36} box="0 0 22 36"><path d="M0 0h22v36H0z" fill="#000" stroke="none" /><path d="M4 10h14v16H4z" fill="#fff" stroke="none" /><path d="M6 12c6 1 6 11 0 12zM16 12c-6 1-6 11 0 12z" fill="#000" stroke="none" /></Icon>
        </AppButton>
        <AppButton><AppTile $bg="#eef1f3" $fg="#3c9ccc">Lc</AppTile></AppButton>
        <AppButton aria-label="Acrobat">
          <Icon w={21} h={32} box="0 0 21 32"><path d="M0 0h21v32H0z" fill="#fafafa" stroke="none" /><path d="M3 26c3 1 7-9 7.500-17 0-4-2-4-1.500 0 1 7 5 12 9 12 3 0 1-3-4-2.500-5 .5-9 3-11 5.500-1 1-1 2 0 2z" stroke="#dd3030" strokeWidth="1.300" /></Icon>
        </AppButton>
        <AppButton aria-label="Remote desktop">
          <Icon w={22} h={36} box="0 0 22 36"><ellipse cx="12" cy="31" rx="6" ry="4.500" fill="#c9ccd1" stroke="none" /><path d="M3 0l19 3-2 24-14-3z" fill="#c9d4ea" stroke="none" /><path d="M5 3l14 2-2 19-10-3z" fill="#1b3fc0" stroke="none" /><path d="M0 8h17v11H0z" fill="#3f8fe0" stroke="none" /><path d="M2 11h13M2 15h13" stroke="#fff" strokeWidth="2" strokeDasharray="2 1" /></Icon>
        </AppButton>
        <AppButton aria-label="Brave" $open $active><Lion fill="#f8501c" w={21} h={36} /></AppButton>
        <AppButton aria-label="Brave Nightly"><Lion fill="#7a35b5" w={21} h={36} tag /></AppButton>
        <AppButton aria-label="Brave Beta"><Lion fill="#f8501c" w={21} h={36} tag /></AppButton>
      </Apps>
      <Tray>
        <Battery>97%</Battery>
        <Icon w={10} h={22} box="0 0 10 22"><path d="M2 0h2v6h2V0h2v6h2v5c0 2-1 4-3 5v6H4v-6c-2-1-4-3-4-5V6h2z" fill="#fff" stroke="none" /></Icon>
        <Icon w={11} h={12} box="0 0 11 12"><path d="M.5 11.500l5-10 5 10" strokeWidth="1.200" /></Icon>
        <Icon w={16} h={18} box="0 0 16 18"><path d="M4 6h10v9H4z" fill="#fff" /><path d="M3 5.500h12v10.500H3zM15.500 8v5M1.500 0v3M4.500 0v3M0 3h5c0 4-2 4-2 7" strokeWidth="1.200" /></Icon>
        <Icon w={13} h={20} box="0 0 13 20"><path d="M.5 7H2l4-5v16l-4-5H.5zM8 7c1 2 1 4 0 6M10 4c2 4 2 8 0 12M12 2c2 5 2 11 0 16" /></Icon>
        <span>ENG</span>
        <Clock>9:11 AM<br />6/17/2020</Clock>
        <Notices aria-label="Notifications">
          <Icon w={15} h={24} box="0 0 15 24"><path d="M0 0h15v18H9v6l-4-6H0z" fill="#fff" stroke="none" /><path d="M3 5h9M3 9h9M3 13h6" stroke="#1e1e1e" strokeWidth="1.500" /></Icon>
          <Badge>1</Badge>
        </Notices>
      </Tray>
    </TaskBar>
  )
}

const App: React.FC = () => (
  <Page>
    <GlobalStyle />
    <Browser />
    <TradingView />
    <Desktop />
  </Page>
)

export default App
